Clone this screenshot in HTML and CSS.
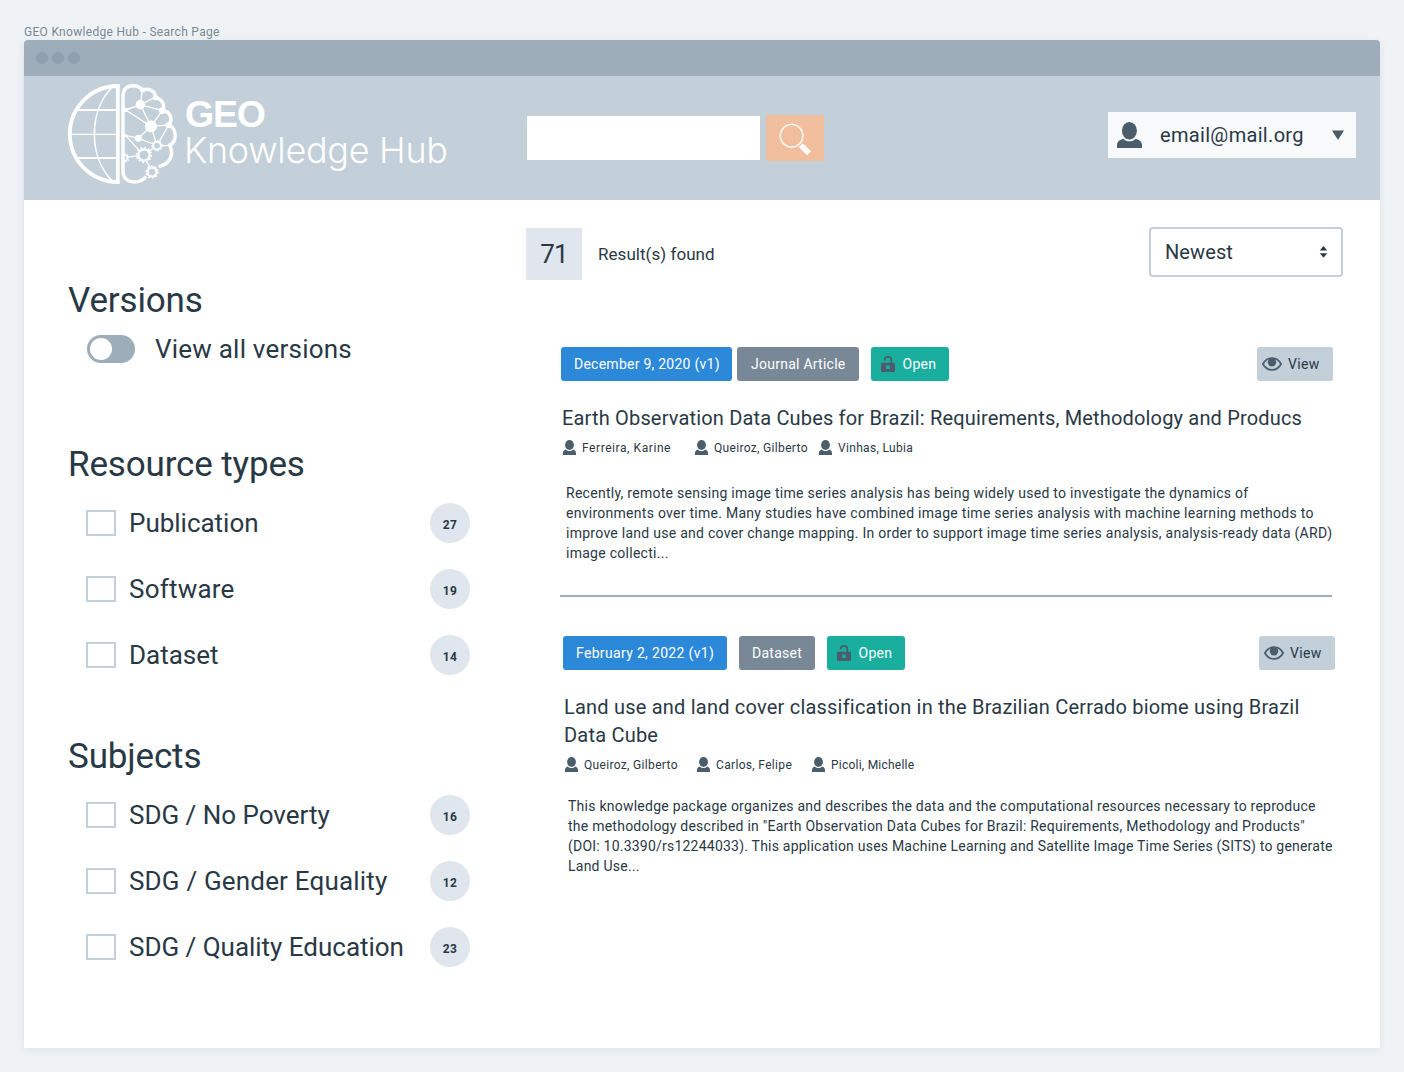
FILE: index.html
```html
<!DOCTYPE html>
<html lang="en">
<head>
<meta charset="utf-8">
<title>GEO Knowledge Hub - Search Page</title>
<link rel="stylesheet" href="styles.css">
</head>
<body>
<svg class="defs" width="0" height="0" aria-hidden="true">
  <symbol id="user" viewBox="0 0 25 26">
    <ellipse cx="12.4" cy="8.8" rx="7.5" ry="8.8"/>
    <path d="M0 26V23C0 19.6 3 18 6.200 16.800C9.500 20.200 15.500 20.200 18.800 16.800C22 18 25 19.600 25 23V26Z"/>
  </symbol>
  <symbol id="person" viewBox="0 0 13 15">
    <ellipse cx="6.500" cy="5" rx="4.400" ry="5"/>
    <path d="M0 15V13C0 11 1.200 10.200 2.900 9.500C4.800 11.500 8.200 11.500 10.100 9.500C11.800 10.200 13 11 13 13V15Z"/>
  </symbol>
  <symbol id="lock" viewBox="0 0 14 16">
    <path fill-rule="evenodd" d="M1 6.700H13A1 1 0 0 1 14 7.700V15A1 1 0 0 1 13 16H1A1 1 0 0 1 0 15V7.700A1 1 0 0 1 1 6.700ZM5.200 9.400V13H8.800V9.400Z"/>
    <path d="M3.700 4.500V3.900A3.300 3.100 0 0 1 10.300 3.900V7" fill="none" stroke="currentColor" stroke-width="1.700"/>
  </symbol>
  <symbol id="eye" viewBox="0 0 20 14">
    <path d="M.9 7C5.200-.9 14.800-.9 19.100 7C14.800 14.900 5.200 14.900 .9 7Z" fill="none" stroke="currentColor" stroke-width="1.700"/>
    <circle cx="10" cy="5.300" r="4.200"/>
  </symbol>
</svg>

<div class="page-name">GEO Knowledge Hub - Search Page</div>
<div class="window">
  <div class="titlebar"><i></i><i></i><i></i></div>

  <header class="header">
    <svg class="logo" width="384" height="106" viewBox="66 82 384 106" fill="none" stroke="#fff">
      <g transform="translate(60 76) scale(.33333)">
        <path d="M173.500 30A144 144 0 0 0 173.500 318Z" stroke-width="11.500"/>
        <path d="M157 33C85 105 85 243 157 315" stroke-width="5"/>
        <path d="M50 102H170M50 246H170" stroke-width="6"/>
        <path d="M28 175H170" stroke-width="4"/>
        <path d="M189 65C187 38 203 29 219 29C233 29 242 34 247 43C266 34 286 44 287 65C306 68 316 88 308 104C330 104 340 130 326 147C352 158 351 198 329 207C341 232 334 263 296 272M258 302C240 325 189 326 189 286V65" stroke-width="10.500"/>
        <path d="M247 42L241 86L286 64M241 86L307 104L273 151L241 86L197 102L273 151L326 147L291 209L273 151L235 187L197 178L240 226M235 187L280 204M262 232L280 215M302 209H330M201 244L236 239M259 255L270 274" stroke-width="4"/>
        <g fill="#fff" stroke="none">
          <circle cx="241" cy="86" r="14"/><circle cx="273" cy="151" r="18"/>
          <circle cx="235" cy="187" r="10.500"/><circle cx="307" cy="104" r="10"/>
          <circle cx="286" cy="65" r="7.500"/><circle cx="248" cy="42" r="7.500"/>
          <circle cx="326" cy="147" r="9"/><circle cx="196" cy="102" r="7"/><circle cx="196" cy="178" r="5"/>
        </g>
        <g fill="#c3cfd9" stroke-width="7">
          <circle cx="252" cy="237" r="17"/><circle cx="291" cy="209" r="11.500" stroke-width="5.500"/>
          <circle cx="276" cy="288" r="13.500"/>
        </g>
        <path d="M193 237A9 9 0 0 1 193 255" stroke-width="4"/>
        <circle cx="252" cy="237" r="22" stroke-width="5" stroke-dasharray="5.500 6.020"/>
        <circle cx="291" cy="209" r="15.500" stroke-width="4" stroke-dasharray="4 4.850"/>
        <circle cx="276" cy="288" r="18" stroke-width="5" stroke-dasharray="5 6.310"/>
        <path d="M193 233A13 13 0 0 1 193 259" stroke-width="4" stroke-dasharray="4 4"/>
      </g>
      <text class="logo-geo" x="185" y="127" textLength="81">GEO</text>
      <text class="logo-name" x="184" y="163" textLength="264">Knowledge Hub</text>
    </svg>
    <form class="search">
      <div class="search-input"></div>
      <div class="search-button">
        <svg width="34" height="34" viewBox="0 0 34 34" fill="none" stroke="#fff">
          <circle cx="13.600" cy="13.700" r="11.300" stroke-width="1.400"/>
          <path d="M22.800 23.200L31 31.200" stroke-width="5.400"/>
        </svg>
      </div>
    </form>
    <div class="account">
      <svg class="dark" width="25" height="26"><use href="#user"/></svg>
      <span>email@mail.org</span>
      <svg class="dark caret" width="12" height="10"><path d="M0 .5H12L6 10Z"/></svg>
    </div>
  </header>

  <main class="content">
    <aside class="filters">
      <h2>Versions</h2>
      <div class="toggle-row"><span class="toggle"><i></i></span><span class="label wide">View all versions</span></div>

      <h2 class="types">Resource types</h2>
      <ul>
        <li><i class="box"></i><span class="label">Publication</span><b>27</b></li>
        <li><i class="box"></i><span class="label wide">Software</span><b>19</b></li>
        <li><i class="box"></i><span class="label">Dataset</span><b>14</b></li>
      </ul>

      <h2 class="subjects">Subjects</h2>
      <ul>
        <li><i class="box"></i><span class="label">SDG / No Poverty</span><b>16</b></li>
        <li><i class="box"></i><span class="label mid">SDG / Gender Equality</span><b>12</b></li>
        <li><i class="box"></i><span class="label">SDG / Quality Education</span><b>23</b></li>
      </ul>
    </aside>

    <section class="results">
      <div class="toolbar">
        <div class="count">71</div>
        <div class="found">Result(s) found</div>
        <div class="sort"><span>Newest</span>
          <svg width="7" height="12" viewBox="0 0 7 12"><path d="M-.2 4.600L3.500 0L7.200 4.600ZM-.2 7.200H7.200L3.500 11.800Z"/></svg>
        </div>
      </div>

      <article class="result">
        <div class="tags">
          <span class="tag date first-date">December 9, 2020 (v1)</span>
          <span class="tag kind article-kind">Journal Article</span>
          <span class="tag open"><svg width="14" height="16"><use href="#lock"/></svg>Open</span>
          <span class="view"><svg width="20" height="14"><use href="#eye"/></svg>View</span>
        </div>
        <h3>Earth Observation Data Cubes for Brazil: Requirements, Methodology and Producs</h3>
        <div class="authors">
          <span class="a-wide"><svg width="13" height="15"><use href="#person"/></svg>Ferreira, Karine</span>
          <span class="a-124"><svg width="13" height="15"><use href="#person"/></svg>Queiroz, Gilberto</span>
          <span><svg width="13" height="15"><use href="#person"/></svg>Vinhas, Lubia</span>
        </div>
        <p>Recently, remote sensing image time series analysis has being widely used to investigate the dynamics of<br>environments over time. Many studies have combined image time series analysis with machine learning methods to<br>improve land use and cover change mapping. In order to support image time series analysis, analysis-ready data (ARD)<br>image collecti...</p>
      </article>

      <hr>

      <article class="result second">
        <div class="tags">
          <span class="tag date second-date">February 2, 2022 (v1)</span>
          <span class="tag kind dataset-kind">Dataset</span>
          <span class="tag open"><svg width="14" height="16"><use href="#lock"/></svg>Open</span>
          <span class="view"><svg width="20" height="14"><use href="#eye"/></svg>View</span>
        </div>
        <h3>Land use and land cover classification in the Brazilian Cerrado biome using Brazil<br>Data Cube</h3>
        <div class="authors">
          <span class="a-132"><svg width="13" height="15"><use href="#person"/></svg>Queiroz, Gilberto</span>
          <span class="a-115"><svg width="13" height="15"><use href="#person"/></svg>Carlos, Felipe</span>
          <span class="a-tight"><svg width="13" height="15"><use href="#person"/></svg>Picoli, Michelle</span>
        </div>
        <p>This knowledge package organizes and describes the data and the computational resources necessary to reproduce<br>the methodology described in "Earth Observation Data Cubes for Brazil: Requirements, Methodology and Products"<br><span class="doi">(DOI: 10.3390/rs12244033). This application uses Machine Learning and Satellite Image Time Series (SITS) to generate</span><br>Land Use...</p>
      </article>
    </section>
  </main>
</div>
</body>
</html>
```
FILE: styles.css
```css
* { box-sizing: border-box; }
body {
  margin: 0;
  padding: 24px;
  height: 1072px;
  background: #eff3f6;
  color: #293845;
  font-family: Roboto, "Open Sans", sans-serif;
  white-space: nowrap;
}
.defs { position: absolute; }
svg { display: block; flex: none; }
svg use { fill: currentColor; }
h2, h3, p, ul { margin: 0; padding: 0; font-weight: 400; list-style: none; }

.page-name { height: 16px; line-height: 16px; font-size: 12px; letter-spacing: .3px; color: #788896; }
.window {
  width: 1356px;
  height: 1008px;
  background: #fff;
  border-radius: 4px 4px 0 0;
  box-shadow: 0 2px 8px rgba(41, 56, 69, .08);
  overflow: hidden;
}
.titlebar { display: flex; align-items: center; gap: 4px; height: 36px; padding-left: 12px; background: #9eadba; }
.titlebar i { width: 12px; height: 12px; border-radius: 50%; background: #8f9fae; }

.header { display: flex; align-items: flex-start; height: 124px; padding: 6px 24px 0 42px; background: #c3cfd9; }
.logo-geo, .logo-name { fill: #fff; stroke: none; }
.logo-geo { font: 700 37.5px "Liberation Sans", Arial, sans-serif; }
.logo-name { font: 300 36px Inter, "Liberation Sans", sans-serif; }
.search { display: flex; align-items: center; gap: 6px; margin: 33px 0 0 77px; }
.search-input { width: 233px; height: 44px; background: #fff; }
.search-button { width: 58px; height: 46px; padding: 7px 0 0 12px; background: #f2bf9e; }
.account {
  display: flex;
  align-items: center;
  width: 248px;
  height: 46px;
  margin: 30px 0 0 auto;
  padding: 0 12px 0 9px;
  background: #f7f9fb;
  font-size: 20px;
  letter-spacing: .32px;
}
.account span { margin-left: 18px; }
.dark { color: #4b5c6b; fill: #4b5c6b; }
.caret { margin-left: auto; }

.content { display: flex; padding-left: 44px; }
.filters { width: 402px; padding-top: 80px; }
h2 { height: 40px; line-height: 42px; font-size: 35px; letter-spacing: -.15px; }
.types { margin-top: 75px; }
.subjects { margin-top: 48px; }
.filters ul { margin-top: 6px; }
.filters li { display: flex; align-items: center; height: 66px; padding-left: 18px; }
.box { width: 30px; height: 26px; margin-right: 13px; border: 2px solid #c3cfd9; }
.label { font-size: 26px; letter-spacing: -.02px; }
.label.mid { letter-spacing: .18px; }
.label.wide { letter-spacing: .22px; }
.filters b {
  width: 40px;
  height: 40px;
  margin-left: auto;
  border-radius: 50%;
  background: #dfe6ed;
  font-size: 12px;
  font-weight: 700;
  line-height: 44px;
  text-align: center;
  letter-spacing: .3px;
}
.toggle-row { display: flex; align-items: center; height: 40px; margin-top: 9px; padding-left: 19px; }
.toggle { width: 48px; height: 28px; margin-right: 20px; padding: 3px; border-radius: 14px; background: #9eadba; }
.toggle i { display: block; width: 22px; height: 22px; border-radius: 50%; background: #fff; }

.results { width: 817px; margin-left: 56px; padding-top: 27px; }
.toolbar { display: flex; align-items: center; height: 52px; }
.count { width: 56px; height: 52px; margin-top: 2px; background: #dfe6ed; font-size: 26px; line-height: 52px; text-align: center; letter-spacing: -.8px; }
.found { margin: 2px 0 0 16px; font-size: 17px; letter-spacing: .04px; }
.sort {
  display: flex;
  align-items: center;
  justify-content: space-between;
  width: 194px;
  height: 50px;
  margin: -2px 0 0 auto;
  padding: 0 14px;
  border: 2px solid #c3cfd9;
  border-radius: 4px;
  font-size: 20px;
  letter-spacing: .1px;
}
.sort svg { fill: #293845; }

.result { width: 772px; margin: 68px 0 0 35px; }
.tags { display: flex; height: 34px; font-size: 14px; line-height: 34px; }
.tag { padding-left: 13px; border-radius: 3px; color: #fff; letter-spacing: .25px; }
.date { background: #2c88d9; }
.first-date { width: 171px; }
.second-date { width: 164px; letter-spacing: .33px; }
.kind { background: #788896; }
.article-kind { width: 122px; margin-left: 5px; padding-left: 14px; }
.dataset-kind { width: 76px; margin-left: 12px; }
.open { display: flex; align-items: center; gap: 7.5px; width: 78px; margin-left: 12px; padding-left: 10px; background: #1aae9f; }
.open svg { color: #4b5c6b; }
.view { display: flex; align-items: center; gap: 6px; width: 76px; margin-left: auto; padding-left: 5px; border-radius: 3px; background: #c3cfd9; letter-spacing: .3px; }
.view svg { color: #4b5c6b; }
h3 { margin: 23px 0 0 1px; font-size: 20px; line-height: 28px; letter-spacing: .17px; }
.authors { display: flex; height: 16px; margin: 8px 0 0 2px; font-size: 12px; line-height: 16px; letter-spacing: .33px; }
.authors span { display: flex; gap: 6px; }
.authors svg { color: #4b5c6b; }
.authors .a-wide { width: 132px; letter-spacing: .57px; }
.a-124 { width: 124px; }
.a-132 { width: 132px; }
.a-115 { width: 115px; }
.authors .a-tight { letter-spacing: .23px; }
.result p { margin: 27px 0 0 5px; font-size: 14px; line-height: 20px; letter-spacing: .272px; }
hr { width: 772px; height: 2px; margin: 32px 0 0 34px; border: 0; background: #9eadba; }

.second { margin: 39px 0 0 37px; }
.second h3 { letter-spacing: .21px; }
.second p { margin-top: 23px; letter-spacing: .245px; }
.doi { letter-spacing: .22px; }
```
